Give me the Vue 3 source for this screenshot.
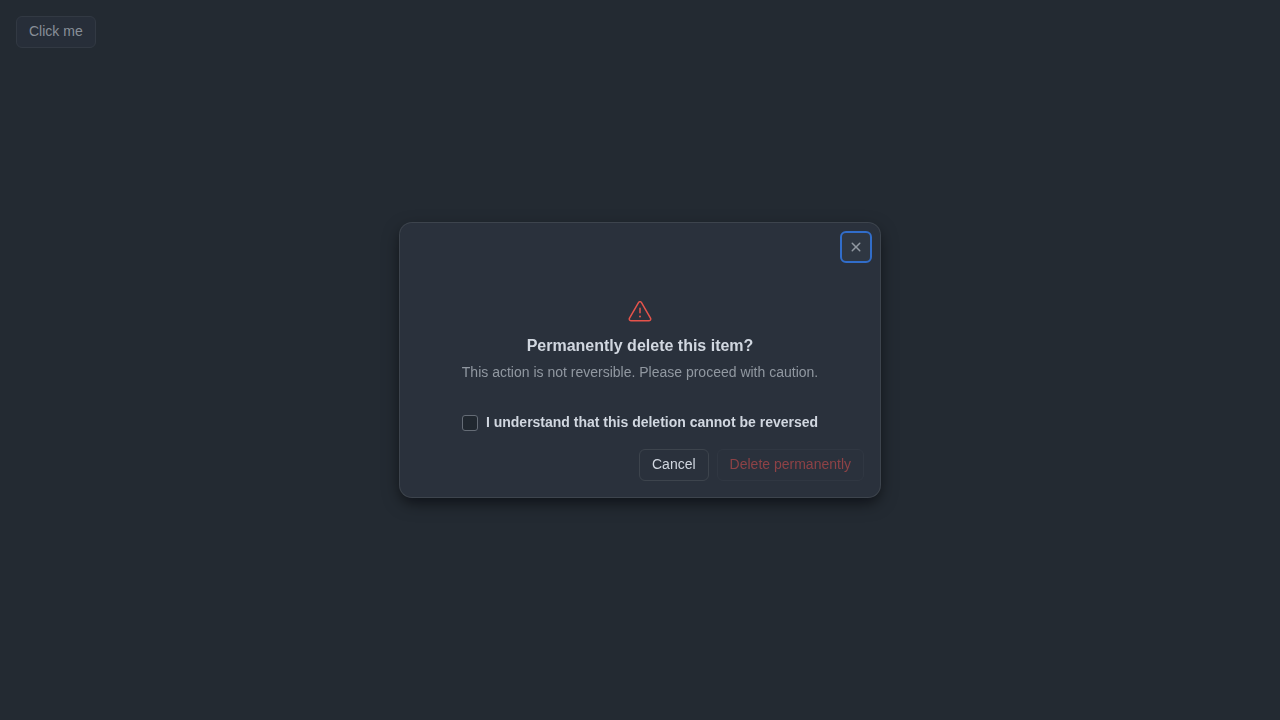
<script setup>
import { ref, onMounted } from 'vue'

const understood = ref(false)
const closeButton = ref(null)

onMounted(() => closeButton.value.focus())
</script>

<template>
  <main class="page">
    <button type="button" class="btn trigger">Click me</button>
  </main>
  <div class="backdrop">
    <section class="dialog" role="alertdialog" aria-modal="true" aria-labelledby="dialog-title" aria-describedby="dialog-text">
      <header class="header">
        <button ref="closeButton" type="button" class="close" aria-label="Close">
          <svg width="16" height="16" viewBox="0 0 16 16" fill="currentColor" aria-hidden="true">
            <path d="M3.72 3.72a.75.75 0 0 1 1.06 0L8 6.94l3.22-3.22a.749.749 0 0 1 1.275.326.749.749 0 0 1-.215.734L9.06 8l3.22 3.22a.749.749 0 0 1-.326 1.275.749.749 0 0 1-.734-.215L8 9.06l-3.22 3.22a.751.751 0 0 1-1.042-.018.751.751 0 0 1-.018-1.042L6.94 8 3.72 4.78a.75.75 0 0 1 0-1.06Z" />
          </svg>
        </button>
      </header>
      <div class="body">
        <svg class="alert" width="24" height="24" viewBox="0 0 24 24" fill="currentColor" aria-hidden="true">
          <path d="M13 17.5a1 1 0 1 1-2 0 1 1 0 0 1 2 0Zm-.25-8.25a.75.75 0 0 0-1.5 0v4.5a.75.75 0 0 0 1.5 0v-4.5Z" />
          <path d="M9.836 3.244c.963-1.665 3.365-1.665 4.328 0l8.967 15.504c.963 1.667-.24 3.752-2.165 3.752H3.034c-1.926 0-3.128-2.085-2.165-3.752Zm3.03.751a1.002 1.002 0 0 0-1.732 0L2.168 19.499A1.002 1.002 0 0 0 3.034 21h17.932a1.002 1.002 0 0 0 .866-1.5L12.866 3.994Z" />
        </svg>
        <h2 id="dialog-title" class="title">Permanently delete this item?</h2>
        <p id="dialog-text" class="text">This action is not reversible. Please proceed with caution.</p>
      </div>
      <div class="confirm">
        <input id="understood" v-model="understood" type="checkbox" class="checkbox" />
        <label for="understood" class="label">I understand that this deletion cannot be reversed</label>
      </div>
      <footer class="footer">
        <button type="button" class="btn cancel">Cancel</button>
        <button type="button" class="btn danger" :disabled="!understood">Delete permanently</button>
      </footer>
    </section>
  </div>
</template>

<style>
body {
  background: #232a32;
  color: #d1d7e0;
  font-family: "Liberation Sans", Arial, sans-serif;
  font-size: 14px;
}
</style>

<style scoped>
.page {
  padding: 16px;
}
.btn {
  box-sizing: border-box;
  height: 32px;
  padding: 0 12px 2px;
  border: 1px solid #3d444d;
  border-radius: 6px;
  background: #2a313c;
  color: #d1d7e0;
  font: 14px/20px "Liberation Sans", Arial, sans-serif;
}
.trigger {
  display: block;
  border-color: #323943;
  background: #272e39;
  color: #888e98;
}
.backdrop {
  position: fixed;
  inset: 0;
  display: flex;
  align-items: center;
  justify-content: center;
}
.dialog {
  width: 480px;
  max-width: calc(100% - 64px);
  border-radius: 12px;
  background: #2a313c;
  box-shadow:
    0 0 0 1px #3d444d,
    0 6px 12px -3px rgba(1, 4, 9, 0.4),
    0 6px 18px 0 rgba(1, 4, 9, 0.4);
}
.header {
  display: flex;
  justify-content: flex-end;
  padding: 8px 8px 0;
}
.close {
  display: grid;
  place-items: center;
  width: 32px;
  height: 32px;
  padding: 0;
  border: 0;
  border-radius: 6px;
  background: #2f3742;
  color: #9198a1;
}
.close:focus {
  outline: 2px solid #316dca;
  outline-offset: -2px;
}
.body {
  display: flex;
  flex-direction: column;
  align-items: center;
  padding: 36px 16px 30px;
  text-align: center;
}
.alert {
  color: #e5534b;
}
.title {
  margin: 12px 0 4px;
  font-size: 16px;
  line-height: 22px;
}
.text {
  margin: 0;
  color: #9198a1;
  line-height: 22px;
}
.confirm {
  display: flex;
  justify-content: center;
  gap: 8px;
  padding: 0 16px 18px;
}
.checkbox {
  appearance: none;
  box-sizing: border-box;
  width: 16px;
  height: 16px;
  margin: 2px 0 0;
  border: 1px solid #656c76;
  border-radius: 3px;
  background: #212830;
}
.checkbox:checked {
  background: #316dca;
}
.label {
  font-weight: 600;
  line-height: 18px;
}
.footer {
  display: flex;
  justify-content: flex-end;
  gap: 8px;
  padding: 0 16px 16px;
}
.danger {
  color: #f47067;
}
.danger:disabled {
  border-color: #303742;
  color: #8d4246;
}
</style>
